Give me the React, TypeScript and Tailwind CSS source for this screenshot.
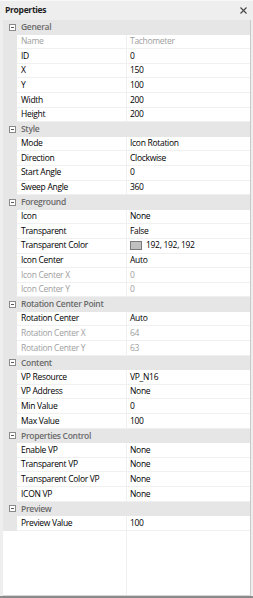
import React from 'react';

type Prop = { label: string; value: string; disabled?: boolean; swatch?: string };
type Category = { name: string; props: Prop[] };

// Property grid content, top to bottom
const categories: Category[] = [
  {
    name: 'General',
    props: [
      { label: 'Name', value: 'Tachometer', disabled: true },
      { label: 'ID', value: '0' },
      { label: 'X', value: '150' },
      { label: 'Y', value: '100' },
      { label: 'Width', value: '200' },
      { label: 'Height', value: '200' },
    ],
  },
  {
    name: 'Style',
    props: [
      { label: 'Mode', value: 'Icon Rotation' },
      { label: 'Direction', value: 'Clockwise' },
      { label: 'Start Angle', value: '0' },
      { label: 'Sweep Angle', value: '360' },
    ],
  },
  {
    name: 'Foreground',
    props: [
      { label: 'Icon', value: 'None' },
      { label: 'Transparent', value: 'False' },
      { label: 'Transparent Color', value: '192, 192, 192', swatch: '#c0c0c0' },
      { label: 'Icon Center', value: 'Auto' },
      { label: 'Icon Center X', value: '0', disabled: true },
      { label: 'Icon Center Y', value: '0', disabled: true },
    ],
  },
  {
    name: 'Rotation Center Point',
    props: [
      { label: 'Rotation Center', value: 'Auto' },
      { label: 'Rotation Center X', value: '64', disabled: true },
      { label: 'Rotation Center Y', value: '63', disabled: true },
    ],
  },
  {
    name: 'Content',
    props: [
      { label: 'VP Resource', value: 'VP_N16' },
      { label: 'VP Address', value: 'None' },
      { label: 'Min Value', value: '0' },
      { label: 'Max Value', value: '100' },
    ],
  },
  {
    name: 'Properties Control',
    props: [
      { label: 'Enable VP', value: 'None' },
      { label: 'Transparent VP', value: 'None' },
      { label: 'Transparent Color VP', value: 'None' },
      { label: 'ICON VP', value: 'None' },
    ],
  },
  {
    name: 'Preview',
    props: [{ label: 'Preview Value', value: '100' }],
  },
];

function MinusBox() {
  return (
    <div className="w-[7px] h-[7px] border border-[#8a8a8a] bg-white flex items-center justify-center">
      <div className="w-[3px] h-px bg-[#555555]" />
    </div>
  );
}

function CategoryRow({ name }: { name: string }) {
  return (
    <div className="h-[14.6px] flex items-center bg-[#e6e6e6] shrink-0">
      <div className="w-[18px] flex justify-center pl-[1px]">
        <MinusBox />
      </div>
      <span className="font-semibold text-[#6a6a6a] leading-none">{name}</span>
    </div>
  );
}

function PropRow({ prop }: { prop: Prop }) {
  const color = prop.disabled ? 'text-[#a0a0a0]' : 'text-black';
  return (
    <div className="h-[14.6px] flex shrink-0">
      <div className="w-[14px] bg-[#e6e6e6]" />
      <div className={`w-[110px] flex items-center pl-[4px] border-b border-r border-[#f0f0f0] ${color}`}>
        <span className="leading-none whitespace-nowrap">{prop.label}</span>
      </div>
      <div className={`flex-1 flex items-center pl-[3px] border-b border-[#f0f0f0] ${color}`}>
        {prop.swatch && (
          <div
            className="w-[12px] h-[9px] border border-[#7a7a7a] mr-[4px]"
            style={{ backgroundColor: prop.swatch }}
          />
        )}
        <span className="leading-none whitespace-nowrap">{prop.value}</span>
      </div>
    </div>
  );
}

export default function App() {
  return (
    <div
      className="w-[253px] h-[598px] bg-[#eeeeee] flex flex-col text-[8.5px] tracking-[-0.3px] overflow-hidden"
      style={{ fontFamily: '"Segoe UI", "Open Sans", sans-serif' }}
    >
      {/* Title bar */}
      <div className="h-[20px] flex items-center justify-between pl-[5px] pr-[5px] border-t border-[#f8f8f8] shrink-0">
        <span className="font-bold text-[#1e1e1e]">Properties</span>
        <svg width="7" height="7" viewBox="0 0 7 7" className="mr-[1px]">
          <path d="M0.5 0.5 L6.5 6.5 M6.5 0.5 L0.5 6.5" stroke="#444444" strokeWidth="1.1" />
        </svg>
      </div>

      {/* Grid */}
      <div className="flex-1 flex flex-col ml-[3px] mr-[2px] bg-white border-r border-[#c9c9c9] border-b-[1.5px] border-b-[#d6d6d6]">
        {categories.map(cat => (
          <React.Fragment key={cat.name}>
            <CategoryRow name={cat.name} />
            {cat.props.map(p => (
              <PropRow key={p.label} prop={p} />
            ))}
          </React.Fragment>
        ))}
        <div className="flex-1 flex">
          <div className="w-[124px] border-r border-[#f0f0f0]" />
        </div>
      </div>
      <div className="h-[2px] bg-[#8a8a8a] shrink-0" />
    </div>
  );
}
